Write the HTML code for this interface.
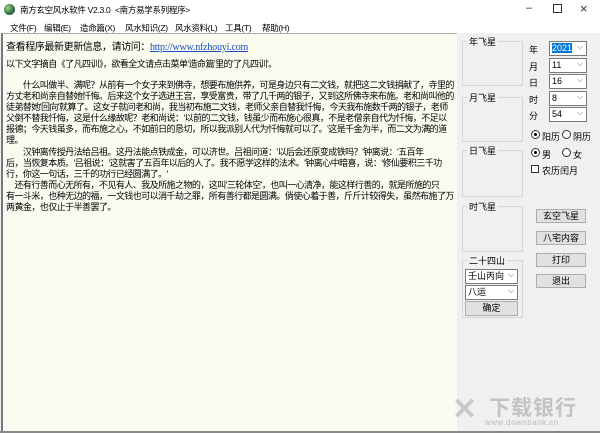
<!DOCTYPE html><html><head><meta charset="utf-8"><style>
*{margin:0;padding:0;box-sizing:border-box}
body{width:600px;height:433px;background:#f0f0f0;position:relative;overflow:hidden;font-family:"Liberation Sans","Noto Sans CJK SC",sans-serif;font-size:9px;color:#000}
.a{position:absolute;white-space:nowrap}
#title{left:0;top:0;width:600px;height:19px;background:#fff}
#menu{left:0;top:19px;width:600px;height:14px;background:#fff}
#txt{left:1px;top:33px;width:456px;height:398px;background:#fbfaf1;border-left:2px solid #777;border-top:1px solid #aaa;overflow:hidden}
.ln{position:absolute;left:3px;white-space:nowrap;font-size:9px;letter-spacing:-0.55px}
.gb{position:absolute;border:1px solid #d6d6d6}
.gl{position:absolute;background:#f0f0f0;padding:0 2px;font-size:9px;top:-7px;left:4px}
.cb{position:absolute;background:#fff;border:1px solid #7a7a7a;font-size:9px;padding:1px 2px;line-height:11px}
.cb:after{content:"⌵";position:absolute;right:3px;top:-1px;color:#666;font-size:8px}
.bt{position:absolute;background:#e1e1e1;border:1px solid #adadad;text-align:center;font-size:9px;line-height:12px}
.rd{position:absolute;width:9px;height:9px;border:1px solid #333;border-radius:50%;background:#fff}
.rd.on:after{content:"";position:absolute;left:2px;top:2px;width:3px;height:3px;border-radius:50%;background:#000}
.m{position:absolute;top:22px;font-size:8.5px;letter-spacing:-0.3px;white-space:nowrap}
</style></head><body>
<div id="title" class="a"></div>
<div class="a" style="left:4px;top:4px;width:11px;height:11px;border-radius:50%;background:radial-gradient(circle at 35% 35%,#9fd08a,#2d6e3a 60%,#1e3f70)"></div>
<div class="a" style="left:20px;top:4px;font-size:8.5px;letter-spacing:-0.3px">南方玄空风水软件 V2.3.0</div>
<div class="a" style="left:115px;top:4px;font-size:8.5px;letter-spacing:-0.3px">&lt;南方易学系列程序&gt;</div>
<div class="a" style="left:526px;top:2px;font-size:11px;color:#333">–</div>
<div class="a" style="left:553px;top:4px;width:9px;height:9px;border:1px solid #333"></div>
<div class="a" style="left:580px;top:1px;font-size:13px;color:#333">×</div>
<div id="menu" class="a"></div>
<div class="m" style="left:10px">文件(F)</div>
<div class="m" style="left:44px">编辑(E)</div>
<div class="m" style="left:80px">造命篇(X)</div>
<div class="m" style="left:125px">风水知识(Z)</div>
<div class="m" style="left:175px">风水资料(L)</div>
<div class="m" style="left:225px">工具(T)</div>
<div class="m" style="left:262px">帮助(H)</div>
<div id="txt" class="a">
<div class="ln" style="top:4px;font-size:10px;letter-spacing:-0.4px">查看程序最新更新信息，请访问：<span style="color:#1a4fc0;text-decoration:underline;font-family:'Liberation Serif',serif;letter-spacing:-0.2px">http://www.nfzhouyi.com</span></div>
<div class="ln" style="top:23px">以下文字摘自《了凡四训》，欲看全文请点击菜单'造命篇'里的'了凡四训'。</div>
<div class="ln" style="top:44px">　　什么叫做半、满呢？从前有一个女子来到佛寺，想要布施供养，可是身边只有二文钱，就把这二文钱捐献了，寺里的</div>
<div class="ln" style="top:55px">方丈老和尚亲自替她忏悔。后来这个女子选进王宫，享受富贵，带了几千两的银子，又到这所佛寺来布施。老和尚叫他的</div>
<div class="ln" style="top:66px">徒弟替她'回向'就算了。这女子就问老和尚，我当初布施二文钱，老师父亲自替我忏悔，今天我布施数千两的银子，老师</div>
<div class="ln" style="top:77px">父倒不替我忏悔，这是什么缘故呢？老和尚说：'以前的二文钱，钱虽少而布施心很真，不是老僧亲自代为忏悔，不足以</div>
<div class="ln" style="top:88px">报德；今天钱虽多，而布施之心，不如前日的恳切，所以我派别人代为忏悔就可以了。'这是千金为半，而二文为满的道</div>
<div class="ln" style="top:99px">理。</div>
<div class="ln" style="top:111px">　　汉钟离传授丹法给吕祖。这丹法能点铁成金，可以济世。吕祖问道：'以后会还原变成铁吗？'钟离说：'五百年</div>
<div class="ln" style="top:122px">后，当恢复本质。'吕祖说：'这就害了五百年以后的人了。我不愿学这样的法术。'钟离心中暗喜，说：'修仙要积三千功</div>
<div class="ln" style="top:133px">行，你这一句话，三千的功行已经圆满了。'</div>
<div class="ln" style="top:144px">　还有行善而心无所有，不见有人、我及所施之物的，这叫'三轮体空'，也叫一心清净，能这样行善的，就是所施的只</div>
<div class="ln" style="top:155px">有一斗米，也种无边的福，一文钱也可以消千劫之罪，所有善行都是圆满。倘使心着于善，斤斤计较得失，虽然布施了万</div>
<div class="ln" style="top:166px">两黄金，也仅止于半善罢了。</div>
</div>
<div class="gb" style="left:462px;top:41px;width:61px;height:45px"><span class="gl">年飞星</span></div>
<div class="gb" style="left:462px;top:97px;width:61px;height:45px"><span class="gl">月飞星</span></div>
<div class="gb" style="left:462px;top:150px;width:61px;height:47px"><span class="gl">日飞星</span></div>
<div class="gb" style="left:462px;top:206px;width:61px;height:46px"><span class="gl">时飞星</span></div>
<div class="gb" style="left:462px;top:260px;width:61px;height:58px"><span class="gl">二十四山</span></div>
<div class="cb" style="left:465px;top:269px;width:53px;height:15px">壬山丙向</div>
<div class="cb" style="left:465px;top:285px;width:53px;height:15px">八运</div>
<div class="bt" style="left:465px;top:301px;width:53px;height:15px">确定</div>
<div class="a" style="left:529px;top:43px">年</div>
<div class="a" style="left:529px;top:60px">月</div>
<div class="a" style="left:529px;top:76px">日</div>
<div class="a" style="left:529px;top:93px">时</div>
<div class="a" style="left:529px;top:109px">分</div>
<div class="cb" style="left:549px;top:41px;width:38px;height:15px"><span style="background:#0078d7;color:#fff">2021</span></div>
<div class="cb" style="left:549px;top:58px;width:38px;height:15px">11</div>
<div class="cb" style="left:549px;top:74px;width:38px;height:15px">16</div>
<div class="cb" style="left:549px;top:91px;width:38px;height:15px">8</div>
<div class="cb" style="left:549px;top:107px;width:38px;height:15px">54</div>
<div class="rd on" style="left:531px;top:130px"></div><div class="a" style="left:542px;top:130px">阳历</div>
<div class="rd" style="left:562px;top:130px"></div><div class="a" style="left:573px;top:130px">阴历</div>
<div class="rd on" style="left:531px;top:148px"></div><div class="a" style="left:542px;top:148px">男</div>
<div class="rd" style="left:562px;top:148px"></div><div class="a" style="left:573px;top:148px">女</div>
<div class="a" style="left:531px;top:165px;width:8px;height:8px;border:1px solid #333;background:#fff"></div><div class="a" style="left:542px;top:164px">农历闰月</div>
<div class="bt" style="left:536px;top:209px;width:50px;height:14px">玄空飞星</div>
<div class="bt" style="left:536px;top:231px;width:50px;height:14px">八宅内容</div>
<div class="bt" style="left:536px;top:253px;width:50px;height:14px">打印</div>
<div class="bt" style="left:536px;top:274px;width:50px;height:14px">退出</div>
<div class="a" style="left:452px;top:392px;font-size:30px;font-weight:bold;color:rgba(150,150,150,.45)">✕</div>
<div class="a" style="left:489px;top:392px;font-size:21px;font-weight:bold;color:rgba(150,150,150,.5);letter-spacing:1px">下载银行</div>
<div class="a" style="left:485px;top:418px;font-size:8px;color:rgba(150,150,150,.6);letter-spacing:.5px">www.downbank.cn</div>
<div class="a" style="left:0;top:431px;width:600px;height:2px;background:#888"></div>
</body></html>
